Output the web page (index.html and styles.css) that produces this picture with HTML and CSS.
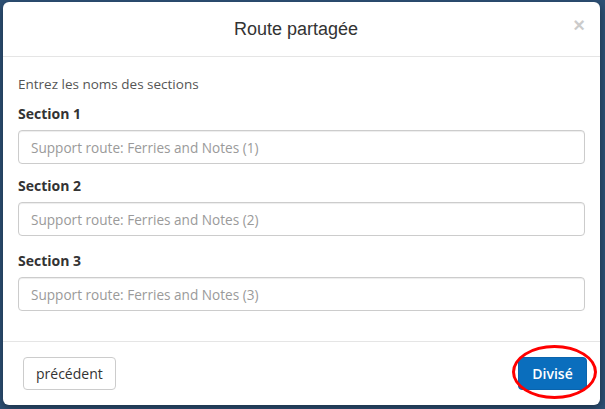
FILE: index.html
```html
<!DOCTYPE html>
<html lang="fr">
<head>
<meta charset="utf-8">
<title>Route partagée</title>
<link rel="stylesheet" href="styles.css">
</head>
<body>
<div class="modal">
  <div class="modal-header">
    <h4 class="modal-title">Route partagée</h4>
    <span class="close">&times;</span>
  </div>
  <div class="modal-body">
    <p class="intro">Entrez les noms des sections</p>
    <div class="form-group">
      <label class="label">Section 1</label>
      <input class="input" type="text" placeholder="Support route: Ferries and Notes (1)">
    </div>
    <div class="form-group">
      <label class="label">Section 2</label>
      <input class="input" type="text" placeholder="Support route: Ferries and Notes (2)">
    </div>
    <div class="form-group">
      <label class="label">Section 3</label>
      <input class="input" type="text" placeholder="Support route: Ferries and Notes (3)">
    </div>
  </div>
  <div class="modal-footer">
    <button class="btn btn-default">précédent</button>
    <div class="primary-wrap">
      <button class="btn btn-primary">Divisé</button>
      <span class="highlight"></span>
    </div>
  </div>
</div>
</body>
</html>
```
FILE: styles.css
```css
html, body {
  margin: 0;
  padding: 0;
}
body {
  background: #2d5075;
  width: 605px;
  height: 409px;
  overflow: hidden;
  padding: 2px 0 0 3px;
  box-sizing: border-box;
  font-family: "Open Sans", "Liberation Sans", sans-serif;
  color: #333;
}
.modal {
  width: 597px;
  height: 403px;
  background: #fff;
  border-radius: 6px;
  box-shadow: 0 3px 9px rgba(0,0,0,0.4);
  display: flex;
  flex-direction: column;
  box-sizing: border-box;
}
.modal-header {
  position: relative;
  height: 55px;
  border-bottom: 1px solid #e5e5e5;
  display: flex;
  align-items: center;
  justify-content: center;
  box-sizing: border-box;
  padding-right: 11px;
}
.modal-title {
  margin: 0;
  font-family: "Liberation Sans", Arial, sans-serif;
  font-weight: normal;
  font-size: 18px;
  color: #333;
  padding-top: 1px;
}
.close {
  position: absolute;
  right: 15px;
  top: 13px;
  font-family: "Liberation Sans", Arial, sans-serif;
  font-size: 20px;
  font-weight: bold;
  color: #000;
  opacity: 0.2;
  line-height: 20px;
}
.modal-body {
  padding: 17px 15px 0 15px;
  flex: 1;
}
.intro {
  margin: 0 0 10px;
  font-size: 13.5px;
  line-height: 20px;
  color: #555;
}
.form-group {
  display: flex;
  flex-direction: column;
  margin-bottom: 12px;
}
.form-group:nth-child(3) {
  margin-bottom: 15px;
}
.label {
  font-size: 14px;
  font-weight: bold;
  line-height: 20px;
  margin-bottom: 6px;
  color: #333;
}
.input {
  height: 34px;
  box-sizing: border-box;
  border: 1px solid #ccc;
  border-radius: 4px;
  padding: 6px 12px;
  font-family: "Open Sans", "Liberation Sans", sans-serif;
  font-size: 13.6px;
  color: #555;
  background: #fff;
  box-shadow: inset 0 1px 1px rgba(0,0,0,0.075);
  width: 100%;
}
.input::placeholder {
  color: #9a9a9a;
}
.modal-footer {
  border-top: 1px solid #e5e5e5;
  padding: 15px 13px 15px 20px;
  display: flex;
  justify-content: space-between;
  align-items: center;
}
.btn {
  height: 33px;
  box-sizing: border-box;
  border-radius: 4px;
  font-family: "Open Sans", "Liberation Sans", sans-serif;
  font-size: 14px;
  padding: 6px 12px;
  line-height: 20px;
}
.btn-default {
  background: #fff;
  border: 1px solid #ccc;
  color: #333;
}
.btn-primary {
  background: #0a6ebd;
  border: 1px solid #0a64ad;
  color: #fff;
  font-weight: 600;
  width: 69px;
}
.primary-wrap {
  position: relative;
}
.highlight {
  position: absolute;
  left: -6px;
  top: -12px;
  width: 85px;
  height: 54px;
  border: 3px solid #f00;
  border-radius: 50%;
  box-sizing: border-box;
}
```
